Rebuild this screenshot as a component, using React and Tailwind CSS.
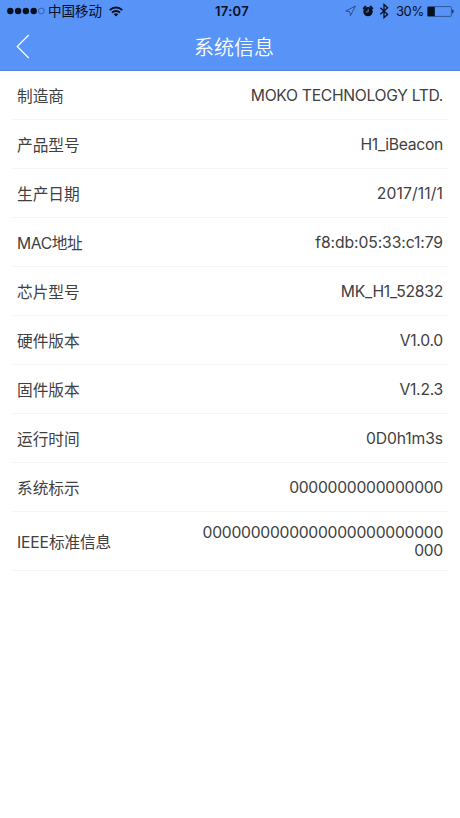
import React from "react";

const rows = [
  { label: "制造商", value: "MOKO TECHNOLOGY LTD.", spacing: "tracking-[-0.32px]" },
  { label: "产品型号", value: "H1_iBeacon", spacing: "tracking-[-0.3px]" },
  { label: "生产日期", value: "2017/11/1", spacing: "tracking-[0.12px]" },
  { label: "MAC地址", value: "f8:db:05:33:c1:79", spacing: "tracking-[-0.1px]", labelSpacing: "tracking-[-0.4px]" },
  { label: "芯片型号", value: "MK_H1_52832", spacing: "tracking-[-0.25px]" },
  { label: "硬件版本", value: "V1.0.0", spacing: "tracking-[-0.25px]" },
  { label: "固件版本", value: "V1.2.3", spacing: "tracking-[-0.25px]" },
  { label: "运行时间", value: "0D0h1m3s", spacing: "tracking-[-0.1px]" },
  { label: "系统标示", value: "0000000000000000", spacing: "tracking-[-0.28px]" },
  {
    label: "IEEE标准信息",
    value: "0000000000000000000000000000",
    spacing: "tracking-[-0.28px]",
    labelSpacing: "tracking-[-0.15px]",
    tall: true,
  },
];

function SignalDots() {
  return (
    <svg width="38" height="8" viewBox="0 0 38 8" className="shrink-0">
      {[3.3, 11.1, 18.9, 26.7].map((x) => (
        <circle key={x} cx={x} cy="4" r="3.2" fill="#06101f" />
      ))}
      <circle cx="34.4" cy="4" r="2.9" fill="none" stroke="#1f4076" strokeWidth="0.6" />
    </svg>
  );
}

function Wifi() {
  return (
    <svg width="14" height="11" viewBox="0 0 14 11" fill="none" stroke="#06101f" strokeWidth="1.9" className="shrink-0">
      <path d="M0.8 4.1C4.3 0.6 9.7 0.6 13.2 4.1" />
      <path d="M3 6.6C5.2 4.4 8.8 4.4 11 6.6" />
      <path d="M7 10.4L4.8 8.2C6 7 8 7 9.2 8.2Z" fill="#06101f" stroke="none" />
    </svg>
  );
}

function StatusIcons() {
  return (
    <svg width="48" height="16" viewBox="0 0 48 16" fill="none" className="shrink-0">
      <path d="M10.4 3L0.8 8L4.8 8.7L5.4 12.8Z" stroke="#1f4076" strokeWidth="0.8" strokeLinejoin="round" />
      <circle cx="23" cy="8.6" r="4.7" fill="#06101f" />
      <path d="M18.5 5.3L20.5 3.5M27.5 5.3L25.5 3.5" stroke="#06101f" strokeWidth="1.7" strokeLinecap="round" />
      <path d="M23.2 5.8V8.9H20.8" stroke="#5893f8" strokeWidth="0.9" />
      <path d="M35.3 4.8L42.6 11.4L39 14.5V1.5L42.6 4.7L35.3 11.2" stroke="#06101f" strokeWidth="1.3" />
    </svg>
  );
}

function Battery() {
  return (
    <svg width="28" height="11" viewBox="0 0 28 11" className="shrink-0">
      <rect x="0.4" y="0.6" width="24" height="9.8" rx="1" fill="none" stroke="#1f4076" strokeWidth="0.7" />
      <rect x="0.6" y="0.9" width="7.2" height="9.2" fill="#06101f" />
      <path d="M25.3 3.6C27 4 27 7 25.3 7.4Z" fill="#06101f" />
    </svg>
  );
}

function StatusBar() {
  return (
    <div className="grid h-[23px] grid-cols-[1fr_auto_1fr] items-center text-[13px] text-[#06101f]">
      <div className="flex h-[22px] items-center self-start pl-[7px]">
        <SignalDots />
        <span className="ml-[3px] mr-[7px] text-[13.5px] leading-[22px]">中国移动</span>
        <Wifi />
      </div>
      <span className="pl-1 font-semibold tracking-[0.3px]">17:07</span>
      <div className="flex h-[22px] items-center justify-end self-start pr-[5px]">
        <StatusIcons />
        <span className="ml-[3px] mr-[3px] pt-px tracking-[-0.3px]">30%</span>
        <Battery />
      </div>
    </div>
  );
}

export default function App() {
  return (
    <div className="h-[818px] w-[460px] overflow-hidden bg-white font-['Inter','Noto_Sans_CJK_SC',sans-serif]">
      <header className="h-[71px] border-b border-[#5488e0] bg-[#5893f8]">
        <StatusBar />
        <div className="grid h-[47px] grid-cols-[1fr_auto_1fr] items-center text-white">
          <svg width="14" height="25" viewBox="0 0 14 25" fill="none" className="ml-4">
            <path d="M12.8 1L1.2 12.5L12.8 24" stroke="white" strokeWidth="1.2" />
          </svg>
          <h1 className="pl-2 pt-[3px] text-[20px] font-[350] leading-[44px]">系统信息</h1>
        </div>
      </header>
      <ul className="mx-3">
        {rows.map((row) => (
          <li
            key={row.label}
            className={`flex items-center justify-between border-b border-[#f5f5f5] px-[5px] text-[15.7px] text-[#404040] ${
              row.tall ? "h-[59px]" : "h-[49px]"
            }`}
          >
            <span className={`pt-[3px] leading-6 ${row.labelSpacing || ""}`}>{row.label}</span>
            <span className={`max-w-[246px] break-all pt-px text-right leading-[18px] ${row.spacing}`}>
              {row.value}
            </span>
          </li>
        ))}
      </ul>
    </div>
  );
}
